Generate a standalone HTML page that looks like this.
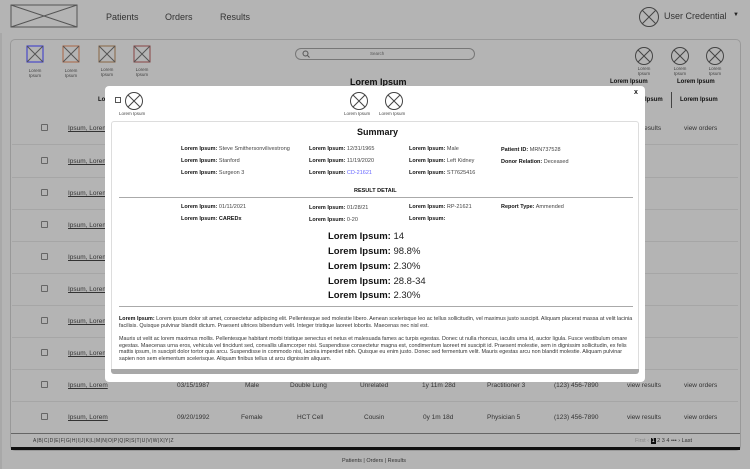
<!DOCTYPE html>
<html><head><meta charset="utf-8"><style>
*{margin:0;padding:0;box-sizing:border-box}
body{width:750px;height:469px;background:#b4b4b4;font-family:"Liberation Sans",sans-serif;position:relative;overflow:hidden;color:#222}
.a{position:absolute}
.nav{font-size:9px;color:#333}
.ic{position:absolute;text-align:center;font-size:4.5px;color:#444;line-height:5px}
.row{position:absolute;left:12px;width:726px;height:32px;border-bottom:1px solid #a6a6a6;font-size:6.5px;color:#333}
.row span{position:absolute;top:12px}
.cb{position:absolute;left:29px;top:11px;width:7px;height:7px;border:1px solid #666;border-radius:1px}
.b{font-weight:bold;color:#111}
.f{font-size:5.5px;color:#444;position:absolute}
.f b{color:#111}
.big{position:absolute;left:328px;font-size:9.5px;color:#222}
.big b{color:#111}
</style></head><body>
<svg class="a" style="left:10px;top:4px" width="68" height="24"><rect x="1" y="1" width="66" height="22" fill="none" stroke="#555"/><path d="M1 1L67 23M67 1L1 23" stroke="#555"/></svg>
<div class="a nav" style="left:106px;top:12px">Patients</div>
<div class="a nav" style="left:165px;top:12px">Orders</div>
<div class="a nav" style="left:220px;top:12px">Results</div>
<svg class="a" style="left:638px;top:6px" width="22" height="22"><circle cx="11" cy="11" r="9.5" fill="none" stroke="#444"/><path d="M4.5 4.5L17.5 17.5M17.5 4.5L4.5 17.5" stroke="#444"/></svg>
<div class="a nav" style="left:664px;top:11px">User Credential</div>
<div class="a" style="left:733px;top:12px;font-size:6px">▼</div>
<div class="a" style="left:10px;top:39px;width:731px;height:412px;border:1px solid #999;border-radius:5px"></div>
<div class="a" style="left:0;top:33px;width:2px;height:436px;background:#a8a8a8"></div>
<svg class="a" style="left:26px;top:45px" width="20" height="20"><rect x="1" y="1" width="16" height="16" fill="none" stroke="#33c"/><path d="M1 1L17 17M17 1L1 17" stroke="#555"/></svg>
<svg class="a" style="left:62px;top:45px" width="20" height="20"><rect x="1" y="1" width="16" height="16" fill="none" stroke="#a64"/><path d="M1 1L17 17M17 1L1 17" stroke="#555"/></svg>
<svg class="a" style="left:98px;top:45px" width="20" height="20"><rect x="1" y="1" width="16" height="16" fill="none" stroke="#864"/><path d="M1 1L17 17M17 1L1 17" stroke="#555"/></svg>
<svg class="a" style="left:133px;top:45px" width="20" height="20"><rect x="1" y="1" width="16" height="16" fill="none" stroke="#844"/><path d="M1 1L17 17M17 1L1 17" stroke="#555"/></svg>
<div class="ic" style="left:24px;top:68px;width:22px">Lorem<br>Ipsum</div>
<div class="ic" style="left:60px;top:68px;width:22px">Lorem<br>Ipsum</div>
<div class="ic" style="left:96px;top:67px;width:22px">Lorem<br>Ipsum</div>
<div class="ic" style="left:131px;top:67px;width:22px">Lorem<br>Ipsum</div>
<div class="a" style="left:295px;top:48px;width:180px;height:12px;border:1px solid #777;border-radius:7px"></div>
<svg class="a" style="left:302px;top:50px" width="8" height="8"><circle cx="3.5" cy="3.5" r="2.5" fill="none" stroke="#555"/><path d="M5.5 5.5L7.5 7.5" stroke="#555"/></svg>
<div class="a" style="left:370px;top:51px;font-size:4.5px;color:#555">Search</div>
<div class="a b" style="left:350px;top:77px;font-size:9px">Lorem Ipsum</div>
<svg class="a" style="left:634px;top:46px" width="20" height="20"><circle cx="10" cy="10" r="8.5" fill="none" stroke="#444"/><path d="M4 4L16 16M16 4L4 16" stroke="#444"/></svg>
<svg class="a" style="left:670px;top:46px" width="20" height="20"><circle cx="10" cy="10" r="8.5" fill="none" stroke="#444"/><path d="M4 4L16 16M16 4L4 16" stroke="#444"/></svg>
<svg class="a" style="left:705px;top:46px" width="20" height="20"><circle cx="10" cy="10" r="8.5" fill="none" stroke="#444"/><path d="M4 4L16 16M16 4L4 16" stroke="#444"/></svg>
<div class="ic" style="left:633px;top:66px;width:22px">Lorem<br>Ipsum</div>
<div class="ic" style="left:669px;top:66px;width:22px">Lorem<br>Ipsum</div>
<div class="ic" style="left:704px;top:66px;width:22px">Lorem<br>Ipsum</div>
<div class="a b" style="left:610px;top:79px;font-size:6px">Lorem Ipsum</div>
<div class="a b" style="left:677px;top:79px;font-size:6px">Lorem Ipsum</div>
<div class="a b" style="left:98px;top:97px;font-size:6px">Lo</div>
<div class="a b" style="left:645px;top:97px;font-size:6px">Ipsum</div>
<div class="a" style="left:671px;top:92px;width:1px;height:16px;background:#444"></div>
<div class="a b" style="left:680px;top:97px;font-size:6px">Lorem Ipsum</div>
<div class="row" style="top:113px"><div class="cb"></div><span style="left:56px;text-decoration:underline">Ipsum, Lorem</span><span style="left:630px">results</span><span style="left:672px">view orders</span></div>
<div class="row" style="top:146px"><div class="cb"></div><span style="left:56px;text-decoration:underline">Ipsum, Lorem</span></div>
<div class="row" style="top:178px"><div class="cb"></div><span style="left:56px;text-decoration:underline">Ipsum, Lorem</span></div>
<div class="row" style="top:210px"><div class="cb"></div><span style="left:56px;text-decoration:underline">Ipsum, Lorem</span></div>
<div class="row" style="top:242px"><div class="cb"></div><span style="left:56px;text-decoration:underline">Ipsum, Lorem</span></div>
<div class="row" style="top:274px"><div class="cb"></div><span style="left:56px;text-decoration:underline">Ipsum, Lorem</span></div>
<div class="row" style="top:306px"><div class="cb"></div><span style="left:56px;text-decoration:underline">Ipsum, Lorem</span></div>
<div class="row" style="top:338px"><div class="cb"></div><span style="left:56px;text-decoration:underline">Ipsum, Lorem</span></div>
<div class="row" style="top:370px"><div class="cb"></div><span style="left:56px;text-decoration:underline">Ipsum, Lorem</span><span style="left:165px">03/15/1987</span><span style="left:233px">Male</span><span style="left:278px">Double Lung</span><span style="left:348px">Unrelated</span><span style="left:410px">1y 11m 28d</span><span style="left:475px">Practitioner 3</span><span style="left:542px">(123) 456-7890</span><span style="left:615px">view results</span><span style="left:672px">view orders</span></div>
<div class="row" style="top:402px"><div class="cb"></div><span style="left:56px;text-decoration:underline">Ipsum, Lorem</span><span style="left:165px">09/20/1992</span><span style="left:229px">Female</span><span style="left:285px">HCT Cell</span><span style="left:352px">Cousin</span><span style="left:411px">0y 1m 18d</span><span style="left:475px">Physician 5</span><span style="left:542px">(123) 456-7890</span><span style="left:615px">view results</span><span style="left:672px">view orders</span></div>
<div class="a" style="left:11px;top:433px;width:729px;height:1px;background:#666"></div>
<div class="a" style="left:33px;top:438px;font-size:5px;color:#333;letter-spacing:.4px">A|B|C|D|E|F|G|H|I|J|K|L|M|N|O|P|Q|R|S|T|U|V|W|X|Y|Z</div>
<div class="a" style="left:635px;top:438px;font-size:5.5px;color:#333"><span style="color:#888">First ‹</span> <span style="background:#111;color:#fff;padding:0 1px">1</span> 2 3 4 ••• › Last</div>
<div class="a" style="left:11px;top:447px;width:729px;height:3px;background:#111"></div>
<div class="a" style="left:342px;top:458px;font-size:5.5px;color:#333">Patients | Orders | Results</div>
<div class="a" style="left:105px;top:86px;width:540px;height:296px;background:#fff;border-radius:4px"></div>
<div class="a" style="left:115px;top:97px;width:6px;height:6px;border:1px solid #555"></div>
<svg class="a" style="left:124px;top:91px" width="20" height="20"><circle cx="10" cy="10" r="8.5" fill="none" stroke="#444"/><path d="M4 4L16 16M16 4L4 16" stroke="#444"/></svg>
<div class="a" style="left:119px;top:111px;font-size:4.5px;color:#444">Lorem Ipsum</div>
<svg class="a" style="left:349px;top:91px" width="20" height="20"><circle cx="10" cy="10" r="8.5" fill="none" stroke="#444"/><path d="M4 4L16 16M16 4L4 16" stroke="#444"/></svg>
<svg class="a" style="left:384px;top:91px" width="20" height="20"><circle cx="10" cy="10" r="8.5" fill="none" stroke="#444"/><path d="M4 4L16 16M16 4L4 16" stroke="#444"/></svg>
<div class="a" style="left:344px;top:111px;font-size:4.5px;color:#444">Lorem Ipsum</div>
<div class="a" style="left:379px;top:111px;font-size:4.5px;color:#444">Lorem Ipsum</div>
<div class="a b" style="left:634px;top:89px;font-size:7px">x</div>
<div class="a" style="left:111px;top:121px;width:528px;height:250px;border:1px solid #ddd;border-radius:3px;background:#fff"></div>
<div class="a" style="left:111px;top:369px;width:528px;height:5px;background:#a8a8a8;border-radius:0 0 3px 3px"></div>
<div class="a b" style="left:357px;top:127px;font-size:9px">Summary</div>
<div class="f" style="left:181px;top:146px"><b>Lorem Ipsum:</b> Steve Smithersonvilivestrong</div>
<div class="f" style="left:181px;top:158px"><b>Lorem Ipsum:</b> Stanford</div>
<div class="f" style="left:181px;top:170px"><b>Lorem Ipsum:</b> Surgeon 3</div>
<div class="f" style="left:309px;top:146px"><b>Lorem Ipsum:</b> 12/31/1965</div>
<div class="f" style="left:309px;top:158px"><b>Lorem Ipsum:</b> 11/19/2020</div>
<div class="f" style="left:309px;top:170px"><b>Lorem Ipsum:</b> <span style="color:#66f">CD-21621</span></div>
<div class="f" style="left:409px;top:146px"><b>Lorem Ipsum:</b> Male</div>
<div class="f" style="left:409px;top:158px"><b>Lorem Ipsum:</b> Left Kidney</div>
<div class="f" style="left:409px;top:170px"><b>Lorem Ipsum:</b> ST7625416</div>
<div class="f" style="left:501px;top:147px"><b>Patient ID:</b> MRN737528</div>
<div class="f" style="left:501px;top:159px"><b>Donor Relation:</b> Deceased</div>
<div class="a b" style="left:354px;top:188px;font-size:5.5px">RESULT DETAIL</div>
<div class="a" style="left:119px;top:197px;width:514px;height:1px;background:#aaa"></div>
<div class="f" style="left:181px;top:204px"><b>Lorem Ipsum:</b> 01/11/2021</div>
<div class="f" style="left:181px;top:216px"><b>Lorem Ipsum: CAREDx</b></div>
<div class="f" style="left:309px;top:205px"><b>Lorem Ipsum:</b> 01/28/21</div>
<div class="f" style="left:309px;top:217px"><b>Lorem Ipsum:</b> 0-20</div>
<div class="f" style="left:409px;top:204px"><b>Lorem Ipsum:</b> RP-21621</div>
<div class="f" style="left:409px;top:216px"><b>Lorem Ipsum:</b></div>
<div class="f" style="left:501px;top:204px"><b>Report Type:</b> Ammended</div>
<div class="big" style="top:231px"><b>Lorem Ipsum:</b> 14</div>
<div class="big" style="top:246px"><b>Lorem Ipsum:</b> 98.8%</div>
<div class="big" style="top:261px"><b>Lorem Ipsum:</b> 2.30%</div>
<div class="big" style="top:276px"><b>Lorem Ipsum:</b> 28.8-34</div>
<div class="big" style="top:290px"><b>Lorem Ipsum:</b> 2.30%</div>
<div class="a" style="left:119px;top:306px;width:514px;height:1px;background:#aaa"></div>
<div class="a" style="left:119px;top:316px;width:514px;font-size:5.4px;line-height:6.5px;color:#333"><b style="color:#111">Lorem Ipsum:</b> Lorem ipsum dolor sit amet, consectetur adipiscing elit. Pellentesque sed molestie libero. Aenean scelerisque leo ac tellus sollicitudin, vel maximus justo suscipit. Aliquam placerat massa at velit lacinia facilisis. Quisque pulvinar blandit dictum. Praesent ultrices bibendum velit. Integer tristique laoreet lobortis. Maecenas nec nisl est.</div>
<div class="a" style="left:119px;top:336px;width:514px;font-size:5.4px;line-height:6.5px;color:#333">Mauris ut velit ac lorem maximus mollis. Pellentesque habitant morbi tristique senectus et netus et malesuada fames ac turpis egestas. Donec ut nulla rhoncus, iaculis urna id, auctor ligula. Fusce vestibulum ornare egestas. Maecenas urna eros, vehicula vel tincidunt sed, convallis ullamcorper nisi. Suspendisse consectetur magna est, condimentum laoreet mi suscipit id. Praesent molestie, sem in dignissim sollicitudin, ex felis mattis ipsum, in suscipit dolor tortor quis arcu. Suspendisse in commodo nisi, lacinia imperdiet nibh. Quisque eu enim justo. Donec sed fermentum velit. Mauris egestas arcu non blandit molestie. Aliquam pulvinar sapien non sem elementum scelerisque. Aliquam finibus tellus ut arcu dignissim aliquam.</div>
</body></html>
